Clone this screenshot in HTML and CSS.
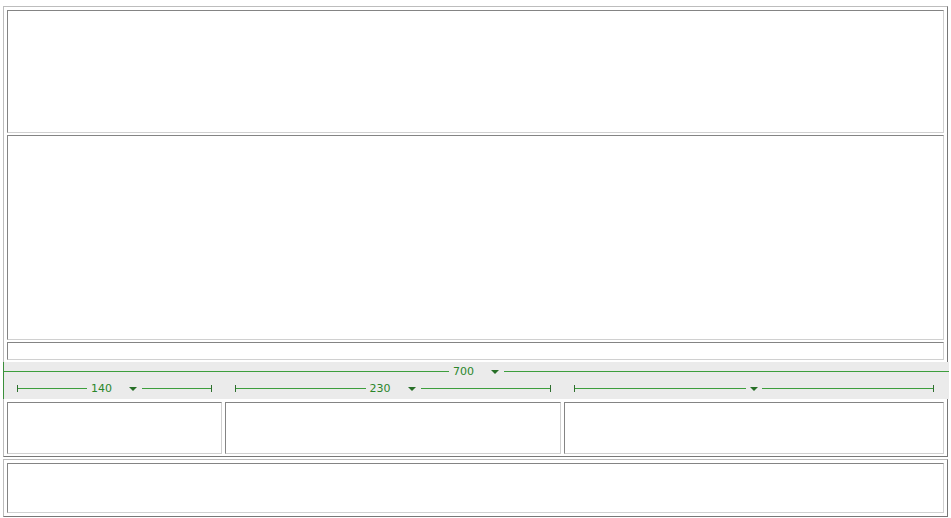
FILE: index.html
```html
<!DOCTYPE html>
<html lang="en">
<head>
    <meta charset="UTF-8">
    <title>Layout</title>
    <link rel="stylesheet" href="styles.css">
</head>
<body>
    <!-- Main table: header, content, strip and three columns -->
    <div class="table main">
        <div class="cell row-head"></div>
        <div class="cell row-main"></div>
        <div class="cell row-strip"></div>

        <!-- Width guides -->
        <div class="widths">
            <div class="guide guide-table">
                <span class="rule"></span>
                <span class="num">700</span>
                <span class="arrow"></span>
                <span class="rule"></span>
            </div>
            <div class="guide-cols">
                <div class="guide">
                    <span class="tick"></span>
                    <span class="rule"></span>
                    <span class="num">140</span>
                    <span class="arrow"></span>
                    <span class="rule"></span>
                    <span class="tick"></span>
                </div>
                <div class="guide">
                    <span class="tick"></span>
                    <span class="rule"></span>
                    <span class="num">230</span>
                    <span class="arrow"></span>
                    <span class="rule"></span>
                    <span class="tick"></span>
                </div>
                <div class="guide">
                    <span class="tick"></span>
                    <span class="rule"></span>
                    <span class="arrow solo"></span>
                    <span class="rule"></span>
                    <span class="tick"></span>
                </div>
            </div>
        </div>

        <div class="cols">
            <div class="cell col"></div>
            <div class="cell col"></div>
            <div class="cell col"></div>
        </div>
    </div>

    <!-- Footer table -->
    <div class="table footer">
        <div class="cell row-foot"></div>
    </div>
</body>
</html>
```

FILE: styles.css
```css
/* Page */
body, html {
    margin: 0;
    padding: 0;
    background: #fff;
    font-family: 'DejaVu Sans', sans-serif;
}

body {
    padding-top: 6px;
}

/* Tables drawn as boxes */
.table {
    box-sizing: border-box;
    width: 945px;
    margin-left: 3px;
    padding: 3px;
    border: 1px solid;
    border-color: #bdbdbd #777 #777 #bdbdbd;
    display: flex;
    flex-direction: column;
    gap: 2px;
}

.main {
    padding-bottom: 2px;
}

.footer {
    margin-top: 2px;
}

.cell {
    box-sizing: border-box;
    border: 1px solid;
    border-color: #848484 #d0d0d0 #d0d0d0 #848484;
}

.row-head { height: 123px; }
.row-main { height: 205px; }
.row-strip { height: 18px; }
.row-foot { height: 50px; }

.cols {
    display: grid;
    grid-template-columns: 215px 336px 1fr;
    gap: 3px;
}

.col { height: 52px; }

/* Width guides */
.widths {
    box-sizing: border-box;
    height: 37px;
    margin: 0 -5px 1px -4px;
    padding-top: 1px;
    background: #ebebeb;
    border-left: 1px solid #3a8f3a;
    display: flex;
    flex-direction: column;
}

.guide {
    height: 17px;
    display: flex;
    align-items: center;
}

.guide-cols {
    display: grid;
    grid-template-columns: 215px 336px 1fr;
    gap: 3px;
    padding-left: 3px;
    padding-right: 5px;
}

.guide-cols .guide {
    margin: 0 10px;
}

.rule {
    flex: 1;
    height: 1px;
    background: #3d9e3d;
}

.tick {
    width: 1px;
    height: 7px;
    background: #2f6f2f;
}

.num {
    font-size: 11px;
    color: #2a862a;
    margin: 0 4px;
    line-height: 17px;
}

.arrow {
    width: 0;
    height: 0;
    margin: 1px 5px 0 13px;
    border-left: 4px solid transparent;
    border-right: 4px solid transparent;
    border-top: 4px solid #276f27;
}

.arrow.solo {
    margin: 1px 4px 0 4px;
}
```
